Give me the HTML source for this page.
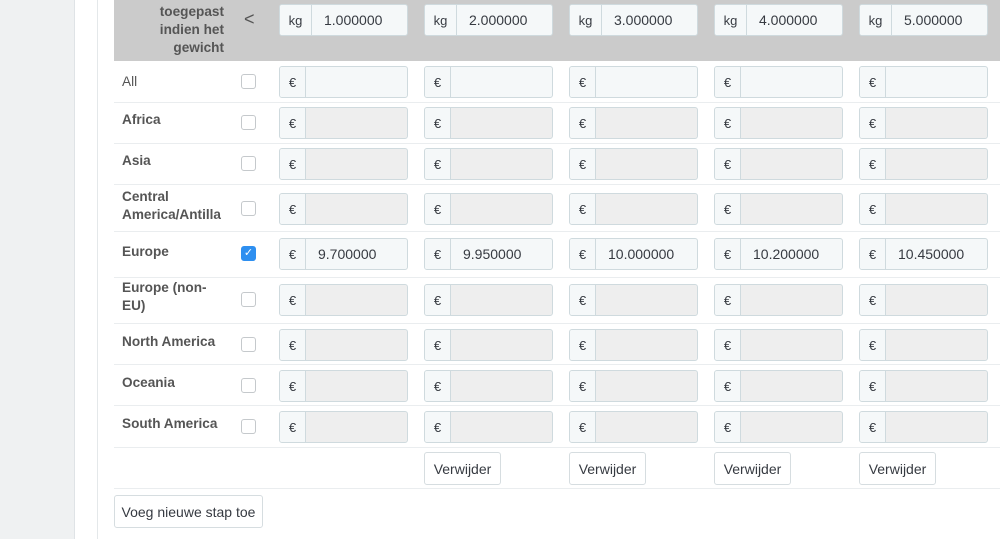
<!DOCTYPE html>
<html><head><meta charset="utf-8"><style>
*{box-sizing:border-box;margin:0;padding:0}
body{width:1000px;height:539px;overflow:hidden;background:#fff;font-family:"Liberation Sans",sans-serif;font-size:13px;color:#363a41;position:relative}
.side{position:absolute;left:0;top:0;width:75px;height:539px;background:#eff1f2;border-right:1px solid #dfe3e6}
.vl{position:absolute;left:97px;top:0;width:1px;height:539px;background:#e4e8ea}
.hdr{position:absolute;left:114px;top:0;width:886px;height:61px;background:#cbcbcb}
.sep{position:absolute;left:114px;width:886px;height:1px;background:#eaedef}
.ig{position:absolute;height:32px;width:129px;border:1px solid #cfdade;border-radius:3px;background:#eeeeee;display:flex;overflow:hidden}
.ig .p{width:26px;background:#f5f8f9;border-right:1px solid #cfdade;display:flex;align-items:center;justify-content:center;font-size:13px}
.ig.kg .p{width:32px}
.ig.w{background:#f5f8f9}
.ig .v{padding-left:12px;display:flex;align-items:center;font-size:14px}
.lbl{position:absolute;left:122px;font-weight:bold;font-size:13.6px;line-height:18px;color:#555}
.cb{position:absolute;left:241px;width:15px;height:15px;border:1px solid #c5c9cc;border-radius:3px;background:#fff}
.cb.on{background:#2e8ff0;border-color:#2e8ff0;color:#fff;font-size:11px;text-align:center;line-height:13px}
.btn{position:absolute;height:33px;border:1px solid #d6dde0;border-radius:3px;background:#fff;font-size:14px;display:flex;align-items:center;justify-content:center;color:#363a41}
</style></head><body>
<div class="side"></div><div class="vl"></div>
<div class="hdr"></div>
<div style="position:absolute;left:130px;top:3px;width:94px;text-align:right;font-weight:bold;color:#555;line-height:18px;font-size:13.6px">toegepast indien het gewicht</div>
<div style="position:absolute;left:244px;top:9px;font-size:18px;color:#555">&lt;</div>

<div class="ig kg w" style="left:279px;top:4px"><div class="p">kg</div><div class="v">1.000000</div></div>
<div class="ig kg w" style="left:424px;top:4px"><div class="p">kg</div><div class="v">2.000000</div></div>
<div class="ig kg w" style="left:569px;top:4px"><div class="p">kg</div><div class="v">3.000000</div></div>
<div class="ig kg w" style="left:714px;top:4px"><div class="p">kg</div><div class="v">4.000000</div></div>
<div class="ig kg w" style="left:859px;top:4px"><div class="p">kg</div><div class="v">5.000000</div></div>

<div class="sep" style="top:102px"></div><div class="sep" style="top:143px"></div><div class="sep" style="top:184px"></div><div class="sep" style="top:231px"></div><div class="sep" style="top:277px"></div><div class="sep" style="top:323px"></div><div class="sep" style="top:364px"></div><div class="sep" style="top:405px"></div><div class="sep" style="top:447px"></div><div class="sep" style="top:488px"></div>

<div class="lbl" style="top:73px;font-weight:normal">All</div>
<div class="lbl" style="top:111px">Africa</div>
<div class="lbl" style="top:152px">Asia</div>
<div class="lbl" style="top:188px">Central<br>America/Antilla</div>
<div class="lbl" style="top:243px">Europe</div>
<div class="lbl" style="top:279px">Europe (non-<br>EU)</div>
<div class="lbl" style="top:333px">North America</div>
<div class="lbl" style="top:374px">Oceania</div>
<div class="lbl" style="top:415px">South America</div>

<div class="cb" style="top:74px"></div>
<div class="cb" style="top:115px"></div>
<div class="cb" style="top:156px"></div>
<div class="cb" style="top:201px"></div>
<div class="cb on" style="top:246px">✓</div>
<div class="cb" style="top:292px"></div>
<div class="cb" style="top:337px"></div>
<div class="cb" style="top:378px"></div>
<div class="cb" style="top:419px"></div>

<div class="ig w" style="left:279px;top:66px"><div class="p">€</div></div>
<div class="ig w" style="left:424px;top:66px"><div class="p">€</div></div>
<div class="ig w" style="left:569px;top:66px"><div class="p">€</div></div>
<div class="ig w" style="left:714px;top:66px"><div class="p">€</div></div>
<div class="ig w" style="left:859px;top:66px"><div class="p">€</div></div>
<div class="ig" style="left:279px;top:107px"><div class="p">€</div></div>
<div class="ig" style="left:424px;top:107px"><div class="p">€</div></div>
<div class="ig" style="left:569px;top:107px"><div class="p">€</div></div>
<div class="ig" style="left:714px;top:107px"><div class="p">€</div></div>
<div class="ig" style="left:859px;top:107px"><div class="p">€</div></div>
<div class="ig" style="left:279px;top:148px"><div class="p">€</div></div>
<div class="ig" style="left:424px;top:148px"><div class="p">€</div></div>
<div class="ig" style="left:569px;top:148px"><div class="p">€</div></div>
<div class="ig" style="left:714px;top:148px"><div class="p">€</div></div>
<div class="ig" style="left:859px;top:148px"><div class="p">€</div></div>
<div class="ig" style="left:279px;top:193px"><div class="p">€</div></div>
<div class="ig" style="left:424px;top:193px"><div class="p">€</div></div>
<div class="ig" style="left:569px;top:193px"><div class="p">€</div></div>
<div class="ig" style="left:714px;top:193px"><div class="p">€</div></div>
<div class="ig" style="left:859px;top:193px"><div class="p">€</div></div>
<div class="ig w" style="left:279px;top:238px"><div class="p">€</div><div class="v">9.700000</div></div>
<div class="ig w" style="left:424px;top:238px"><div class="p">€</div><div class="v">9.950000</div></div>
<div class="ig w" style="left:569px;top:238px"><div class="p">€</div><div class="v">10.000000</div></div>
<div class="ig w" style="left:714px;top:238px"><div class="p">€</div><div class="v">10.200000</div></div>
<div class="ig w" style="left:859px;top:238px"><div class="p">€</div><div class="v">10.450000</div></div>
<div class="ig" style="left:279px;top:284px"><div class="p">€</div></div>
<div class="ig" style="left:424px;top:284px"><div class="p">€</div></div>
<div class="ig" style="left:569px;top:284px"><div class="p">€</div></div>
<div class="ig" style="left:714px;top:284px"><div class="p">€</div></div>
<div class="ig" style="left:859px;top:284px"><div class="p">€</div></div>
<div class="ig" style="left:279px;top:329px"><div class="p">€</div></div>
<div class="ig" style="left:424px;top:329px"><div class="p">€</div></div>
<div class="ig" style="left:569px;top:329px"><div class="p">€</div></div>
<div class="ig" style="left:714px;top:329px"><div class="p">€</div></div>
<div class="ig" style="left:859px;top:329px"><div class="p">€</div></div>
<div class="ig" style="left:279px;top:370px"><div class="p">€</div></div>
<div class="ig" style="left:424px;top:370px"><div class="p">€</div></div>
<div class="ig" style="left:569px;top:370px"><div class="p">€</div></div>
<div class="ig" style="left:714px;top:370px"><div class="p">€</div></div>
<div class="ig" style="left:859px;top:370px"><div class="p">€</div></div>
<div class="ig" style="left:279px;top:411px"><div class="p">€</div></div>
<div class="ig" style="left:424px;top:411px"><div class="p">€</div></div>
<div class="ig" style="left:569px;top:411px"><div class="p">€</div></div>
<div class="ig" style="left:714px;top:411px"><div class="p">€</div></div>
<div class="ig" style="left:859px;top:411px"><div class="p">€</div></div>

<div class="btn" style="left:424px;top:452px;width:77px">Verwijder</div>
<div class="btn" style="left:569px;top:452px;width:77px">Verwijder</div>
<div class="btn" style="left:714px;top:452px;width:77px">Verwijder</div>
<div class="btn" style="left:859px;top:452px;width:77px">Verwijder</div>
<div class="btn" style="left:114px;top:495px;width:149px">Voeg nieuwe stap toe</div>
</body></html>
